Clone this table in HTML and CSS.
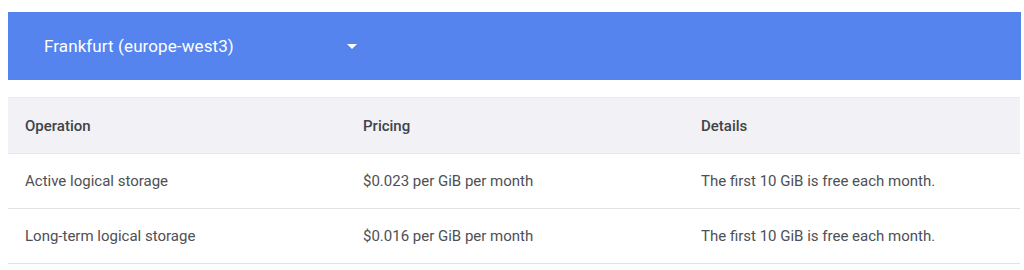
FILE: index.html
```html
<!DOCTYPE html>
<html>
<head>
<meta charset="utf-8">
<link rel="stylesheet" href="styles.css">
</head>
<body>
<div class="region-bar">
  <div class="region-select">
    <span class="region-label">Frankfurt (europe-west3)</span>
    <svg class="caret" width="10" height="5" viewBox="0 0 10 5"><path d="M0 0 L10 0 L5 5 Z" fill="#fff"/></svg>
  </div>
</div>
<div class="pricing-table">
  <div class="row head">
    <div class="cell">Operation</div>
    <div class="cell">Pricing</div>
    <div class="cell">Details</div>
  </div>
  <div class="row">
    <div class="cell">Active logical storage</div>
    <div class="cell">$0.023 per GiB per month</div>
    <div class="cell">The first 10 GiB is free each month.</div>
  </div>
  <div class="row">
    <div class="cell">Long-term logical storage</div>
    <div class="cell">$0.016 per GiB per month</div>
    <div class="cell">The first 10 GiB is free each month.</div>
  </div>
</div>
</body>
</html>
```
FILE: styles.css
```css
html, body { background: #fff; }
body {
  margin: 12px 3px 0 8px;
  font-family: Roboto, "Noto Sans", sans-serif;
}
.region-bar {
  background: #5584ee;
  height: 68px;
  display: flex;
  align-items: center;
  padding-left: 36px;
}
.region-select {
  display: flex;
  align-items: center;
  width: 313px;
  justify-content: space-between;
}
.region-label {
  color: #fff;
  font-size: 17px;
  letter-spacing: 0.1px;
}
.caret { margin-top: 1px; }
.pricing-table {
  margin-top: 17px;
  margin-right: 1px;
}
.row {
  display: grid;
  grid-template-columns: 338px 338px 1fr;
  height: 54px;
  align-items: center;
  border-bottom: 1px solid #e2e2e4;
  font-size: 15px;
  color: #4d5054;
}
.row.head {
  background: #f2f1f5;
  height: 55px;
  border-top: 1px solid #ececef;
  border-bottom: 1px solid #e6e5ea;
  font-weight: 500;
  color: #404347;
}
.cell { padding-left: 17px; }
```
